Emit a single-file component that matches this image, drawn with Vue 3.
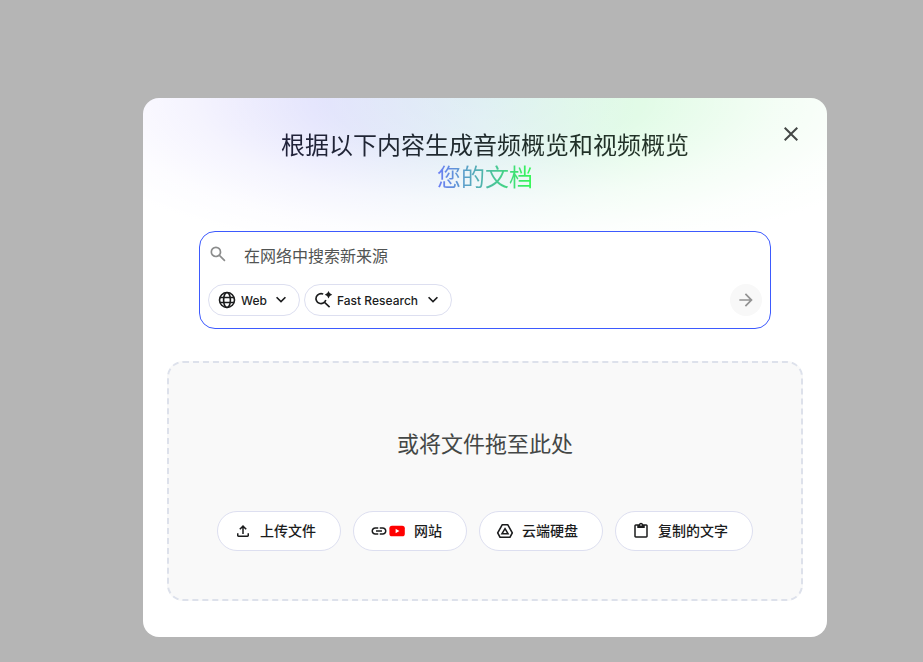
<script setup>
import { ref } from 'vue'

const query = ref('')
const source = ref('Web')
const mode = ref('Fast Research')

const glyphs = {
  close: 'm256-200-56-56 224-224-224-224 56-56 224 224 224-224 56 56-224 224 224 224-56 56-224-224-224 224Z',
  search: 'M784-120 532-372q-30 24-69 38t-83 14q-109 0-184.5-75.5T120-580q0-109 75.5-184.5T380-840q109 0 184.5 75.5T640-580q0 44-14 83t-38 69l252 252-56 56ZM380-400q75 0 127.5-52.5T560-580q0-75-52.5-127.5T380-760q-75 0-127.5 52.5T200-580q0 75 52.5 127.5T380-400Z',
  chevron: 'M480-344 240-584l56-56 184 184 184-184 56 56-240 240Z',
  arrow: 'M647-440H160v-80h487L423-744l57-56 320 320-320 320-57-56 224-224Z',
  upload: 'M440-320v-326L336-542l-56-58 200-200 200 200-56 58-104-104v326h-80ZM240-160q-33 0-56.5-23.5T160-240v-120h80v120h480v-120h80v120q0 33-23.5 56.5T720-160H240Z',
  link: 'M440-280H280q-83 0-141.5-58.5T80-480q0-83 58.5-141.5T280-680h160v80H280q-50 0-85 35t-35 85q0 50 35 85t85 35h160v80ZM320-440v-80h320v80H320Zm200 160v-80h160q50 0 85-35t35-85q0-50-35-85t-85-35H520v-80h160q83 0 141.5 58.5T880-480q0 83-58.5 141.5T680-280H520Z',
  paste: 'M200-120q-33 0-56.5-23.5T120-200v-560q0-33 23.5-56.5T200-840h167q11-35 43-57.5t70-22.5q40 0 71.5 22.5T594-840h166q33 0 56.5 23.5T840-760v560q0 33-23.5 56.5T760-120H200Zm0-80h560v-560h-80v120H280v-120h-80v560Zm280-560q17 0 28.5-11.5T520-800q0-17-11.5-28.5T480-840q-17 0-28.5 11.5T440-800q0 17 11.5 28.5T480-760Z',
}
</script>

<template>
  <div class="backdrop">
    <main class="dialog" role="dialog" aria-labelledby="dialog-title">
      <button class="close" type="button" aria-label="关闭">
        <svg class="icon-lg" viewBox="0 -960 960 960"><path :d="glyphs.close" /></svg>
      </button>

      <h1 id="dialog-title" class="title">
        <span class="title-main">根据以下内容生成音频概览和视频概览</span>
        <span class="title-accent">您的文档</span>
      </h1>

      <form class="search" @submit.prevent>
        <div class="search-row">
          <svg class="icon-md muted" viewBox="0 -960 960 960" aria-hidden="true"><path :d="glyphs.search" /></svg>
          <input v-model="query" class="search-input" type="text" placeholder="在网络中搜索新来源" aria-label="在网络中搜索新来源" />
        </div>
        <div class="search-tools">
          <label class="chip">
            <svg class="icon-md line" viewBox="0 0 20 20" aria-hidden="true">
              <circle cx="10" cy="10" r="7.5" />
              <ellipse cx="10" cy="10" rx="3.4" ry="7.5" />
              <path d="M3 7.5h14M3 12.5h14" />
            </svg>
            <select v-model="source" class="chip-select" aria-label="来源">
              <option>Web</option>
            </select>
            <svg class="icon-md" viewBox="0 -960 960 960" aria-hidden="true"><path :d="glyphs.chevron" /></svg>
          </label>
          <label class="chip">
            <svg class="icon-md" viewBox="0 0 20 20" aria-hidden="true">
              <path class="stroke" d="M10.200 4.100A5 5 0 1 0 12.800 10M11.300 12.200 16.600 17.200" />
              <path d="M15.500 1q.8 2.900 3.700 3.700-2.900.8-3.700 3.700-.8-2.900-3.700-3.700 2.900-.8 3.700-3.700z" />
            </svg>
            <select v-model="mode" class="chip-select" aria-label="模式">
              <option>Fast Research</option>
            </select>
            <svg class="icon-md" viewBox="0 -960 960 960" aria-hidden="true"><path :d="glyphs.chevron" /></svg>
          </label>
          <button class="submit" type="submit" aria-label="提交" :disabled="!query">
            <svg class="icon-md" viewBox="0 -960 960 960"><path :d="glyphs.arrow" /></svg>
          </button>
        </div>
      </form>

      <section class="dropzone">
        <h2 class="drop-title">或将文件拖至此处</h2>
        <div class="sources">
          <button class="source" type="button">
            <svg class="icon-sm" viewBox="0 -960 960 960" aria-hidden="true"><path :d="glyphs.upload" /></svg>
            <span>上传文件</span>
          </button>
          <button class="source" type="button">
            <span class="icon-pair">
              <svg class="icon-sm" viewBox="0 -960 960 960" aria-hidden="true"><path :d="glyphs.link" /></svg>
              <svg class="icon-sm" viewBox="0 0 18 18" aria-hidden="true">
                <rect class="video-box" x="1.4" y="3.700" width="15.400" height="10.600" rx="2.600" />
                <path class="video-play" d="M7.600 6.800v4.400L11.400 9z" />
              </svg>
            </span>
            <span>网站</span>
          </button>
          <button class="source" type="button">
            <svg class="icon-sm line" viewBox="0 0 18 18" aria-hidden="true">
              <path stroke-linejoin="round" d="M6.300 2.700h5.400L16.300 10.800 13.900 15.300H4.100L1.700 10.800z" />
              <path d="M9 6.700 12 11.700H6z" />
            </svg>
            <span>云端硬盘</span>
          </button>
          <button class="source" type="button">
            <svg class="icon-sm" viewBox="0 -960 960 960" aria-hidden="true"><path :d="glyphs.paste" /></svg>
            <span>复制的文字</span>
          </button>
        </div>
      </section>
    </main>
  </div>
</template>

<style>
body {
  margin: 0;
  background: #b5b5b5;
}
</style>

<style scoped>
.backdrop {
  box-sizing: border-box;
  min-height: 100vh;
  padding: 98px 96px 25px 143px;
  font-family: Roboto, "Noto Sans CJK SC", sans-serif;
  color: #1b1c1d;
}

.dialog {
  position: relative;
  box-sizing: border-box;
  padding: 32px 24px 36px;
  border-radius: 16px;
  background:
    radial-gradient(ellipse 66% 160px at 50% 0, rgba(255, 255, 255, 0.1), rgba(255, 255, 255, 0.25) 35%, rgba(255, 255, 255, 0.72) 65%, rgba(255, 255, 255, 0.93) 85%, #fff),
    linear-gradient(90deg, #dcd6fd, #dadbfc 25%, #dceef2 50%, #d8fadf 72%, #d8fbdc);
}

svg {
  display: block;
  flex: none;
  fill: currentColor;
}

.icon-sm {
  width: 18px;
  height: 18px;
}

.icon-md {
  width: 20px;
  height: 20px;
}

.icon-lg {
  width: 24px;
  height: 24px;
}

.line,
.stroke {
  fill: none;
  stroke: currentColor;
  stroke-width: 1.6;
}

.muted {
  color: #8b8c8c;
}

button {
  padding: 0;
  border: 0;
  font: inherit;
  color: inherit;
  cursor: pointer;
}

.close {
  position: absolute;
  top: 24px;
  right: 24px;
  background: none;
  color: #444746;
}

.title {
  display: flex;
  flex-direction: column;
  align-items: center;
  margin: 0;
  font-size: 24px;
  line-height: 32px;
  font-weight: 400;
}

.title-main,
.title-accent {
  background-clip: text;
  color: transparent;
}

.title-main {
  background-image: linear-gradient(90deg, #20213a, #1f2f27 70%, #26362a);
}

.title-accent {
  background-image: linear-gradient(90deg, #6b7cf6, #4fb8a8 50%, #35fa55);
}

.search {
  margin: 37px 32px 32px;
  padding: 0 8px 12px;
  border: 1px solid #3d5afe;
  border-radius: 16px;
  background: rgba(255, 255, 255, 0.8);
}

.search-row {
  display: flex;
  align-items: flex-start;
  gap: 16px;
  padding: 12px 0 16px;
}

.search-input {
  flex: 1;
  min-width: 0;
  height: 24px;
  box-sizing: border-box;
  padding: 0;
  border: 0;
  outline: 0;
  background: none;
  font: 400 16px Roboto, "Noto Sans CJK SC", sans-serif;
  color: #1b1c1d;
}

.search-input::placeholder {
  color: #515453;
  opacity: 1;
}

.search-tools {
  display: flex;
  gap: 4px;
}

.chip {
  display: flex;
  align-items: center;
  gap: 4px;
  box-sizing: border-box;
  height: 32px;
  padding: 0 8px;
  border: 1px solid #dddff0;
  border-radius: 16px;
  background: #fff;
}

.chip-select {
  appearance: none;
  padding: 0;
  border: 0;
  outline: 0;
  background: none;
  font: 500 12px Inter, sans-serif;
  color: inherit;
}

.submit {
  display: grid;
  place-items: center;
  width: 32px;
  height: 32px;
  margin-left: auto;
  border-radius: 50%;
  background: #f8f8f8;
  color: #929292;
}

.dropzone {
  padding: 66px 16px 48px;
  border: 2px dashed #dde1eb;
  border-radius: 16px;
  background: #f9f9f9;
}

.drop-title {
  margin: 0 0 50px;
  font-size: 22px;
  line-height: 32px;
  font-weight: 400;
  color: #444746;
  text-align: center;
}

.sources {
  display: flex;
  flex-wrap: wrap;
  justify-content: center;
  gap: 12px;
}

.source {
  display: flex;
  align-items: center;
  gap: 8px;
  box-sizing: border-box;
  height: 40px;
  padding: 0 24px 0 16px;
  border: 1px solid #dddff0;
  border-radius: 20px;
  background: #fff;
  font-size: 14px;
  font-weight: 500;
  line-height: 20px;
}

.icon-pair {
  display: flex;
}

.video-box {
  fill: #f00;
}

.video-play {
  fill: #fff;
}
</style>
